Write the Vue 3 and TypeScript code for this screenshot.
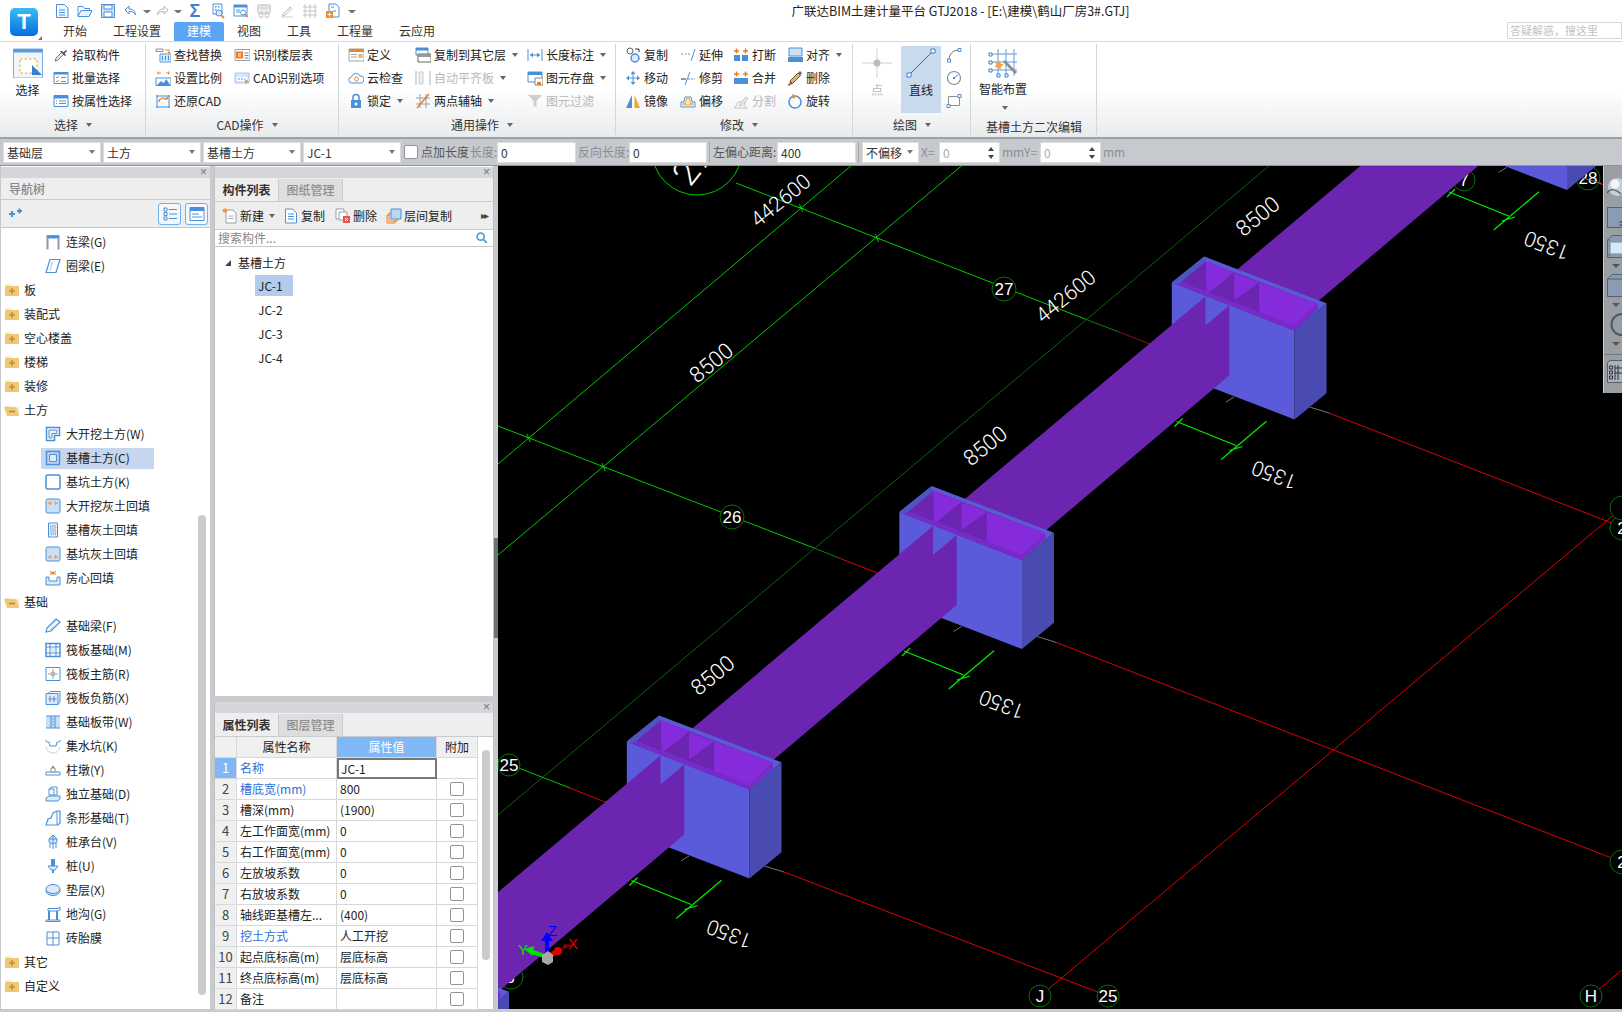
<script setup lang="ts">
const B = '#4a90d9'
const ic: Record<string, string> = {
  doc: `<path d="M2.5 1.5h8l3.5 3.5v9.5h-11.5z" fill="#f3f8fd" stroke="${B}"/><path d="M5 7h6M5 9.5h6M5 12h6" stroke="${B}"/>`,
  open: `<path d="M1 13V3.5h5l1.5 2h5v2" fill="none" stroke="${B}"/><path d="M1 13.5l3-6h11l-3 6z" fill="#eaf3fc" stroke="${B}"/>`,
  save: `<path d="M1.5 1.5h13v13h-13z" fill="#cfe3f7" stroke="${B}"/><path d="M4 2h8v4H4z" fill="#fff" stroke="${B}"/><path d="M4 9h8v5H4z" fill="#fff" stroke="${B}"/>`,
  undo: `<path d="M6 3L2 7l4 4V8.5c3 0 5 .5 6.5 3.5 0-4-2.5-6-6.5-6z" fill="#f3f8fd" stroke="${B}"/>`,
  redo: `<path d="M10 3l4 4-4 4V8.5c-3 0-5 .5-6.5 3.5 0-4 2.5-6 6.5-6z" fill="#fafafa" stroke="#b5b8bb"/>`,
  q1: `<path d="M3 1h9v10H3z" fill="#fff" stroke="${B}"/><path d="M5 3h1.5v1.5H5zM8 3h1.5v1.5H8zM5 6h1.5v1.5H5z" fill="${B}"/><circle cx="9" cy="10" r="3" fill="#dceafa" stroke="${B}"/><path d="M11 12l3 3" stroke="#f08a2c" stroke-width="2"/>`,
  q2: `<path d="M1 2h13v11H1z" fill="#fff" stroke="${B}"/><path d="M1 2h13v2.500H1z" fill="${B}"/><path d="M3 7h4M3 9h4" stroke="${B}"/><circle cx="10" cy="9.500" r="2.500" fill="#fff" stroke="${B}"/><path d="M12 11.500l2.500 2.500" stroke="#f08a2c" stroke-width="2"/>`,
  q3: `<path d="M2 2h12v8H2z" fill="#f4f4f4" stroke="#bbb"/><path d="M2 5h12M6 2v8M10 2v8" stroke="#ccc"/><circle cx="5" cy="12.500" r="2" fill="none" stroke="#bbb"/><circle cx="11" cy="12.500" r="2" fill="none" stroke="#bbb"/>`,
  q4: `<path d="M2 14h12" stroke="#ccc"/><path d="M4 11l7-7 2 1.500-7 7-3 .5z" fill="#eee" stroke="#c4c4c4"/>`,
  q5: `<path d="M3 1v14M8 1v14M13 1v14M1 4h14M1 8h14M1 12h14" stroke="#c6c6c6"/>`,
  q6: `<path d="M4 1h7l3 3v10H4z" fill="#fff" stroke="${B}"/><path d="M6 4h3M8 8h3" stroke="${B}"/><path d="M1 8h7v7H1z" fill="#f08a2c"/><path d="M4.500 9.500v4M2.500 11.500h4" stroke="#fff"/>`,
  pick: `<path d="M2 14l1-3 6-6 2 2-6 6z" fill="#e6e6e6" stroke="#777"/><path d="M9 4l1.500 1.500L13 3l1 1-2.500 2.500L13 8l-1 1-5-5z" fill="#444"/>`,
  batch: `<path d="M1 2.500h14v11H1z" fill="#fff" stroke="${B}"/><path d="M1 2.500h14v2H1z" fill="${B}"/><path d="M3 7l1 1 2-2M3 11l1 1 2-2" fill="none" stroke="#f08a2c"/><path d="M8 7.500h5M8 11.500h5" stroke="${B}"/>`,
  attr: `<path d="M1 2.500h14v11H1z" fill="#fff" stroke="${B}"/><path d="M1 2.500h14v3H1z" fill="${B}"/><path d="M6 8h7M6 10.500h7M3 8h1M3 10.500h1" stroke="${B}"/>`,
  find: `<path d="M1 2h7v2.500H1z" fill="#fff" stroke="#8a8f95"/><path d="M5 7h11v8H5z" fill="#fff" stroke="${B}"/><path d="M7.500 8.500v5M10.500 8.500v5M13.500 8.500v5" stroke="${B}" stroke-width="1.500"/><path d="M10 3h4v3" fill="none" stroke="#f08a2c"/><path d="M12.500 5h3L14 7z" fill="#f08a2c"/>`,
  scale: `<path d="M1 8h15v7.500H1z" fill="#fff" stroke="${B}"/><path d="M2 15l4-4 2.500 2 3-4 3.500 6z" fill="${B}"/><path d="M2 3h4M11 3h4M3 1.500v3M13.500 1.500v3" stroke="#f08a2c"/>`,
  restore: `<path d="M2 2v13M14 2v13M1 3h14M1 14h14" stroke="${B}"/><path d="M4 9a4 4 0 017-2.500" fill="none" stroke="#f08a2c" stroke-width="1.500"/><path d="M9 6.500h4V3z" fill="#f08a2c"/>`,
  floor: `<path d="M1 2.500h15v11H1z" fill="#fff" stroke="#9aa0a6"/><path d="M2 4.500h7v7H2z" fill="#ef7d1f"/><path d="M4 7h3M4 9h3" stroke="#fff"/><path d="M10.500 6h4M10.500 8.500h4M10.500 11h4" stroke="${B}"/>`,
  cad: `<path d="M1 3h14v10H1z" fill="#d4e6f8" stroke="#a8c8e8"/><path d="M3 7h10v4H3z" fill="#fff"/><path d="M4 9h7" stroke="${B}" stroke-dasharray="2 1"/><path d="M11 9l4 3-2.500.5-1 2.500z" fill="#f08a2c"/>`,
  def: `<path d="M1 2h15v12H1z" fill="#fff" stroke="#9fa4aa"/><path d="M1 2h15v3H1z" fill="#e58a20"/><path d="M3 7.500h6M3 10h6" stroke="#9fa4aa"/><path d="M10.500 7h4v4h-4z" fill="#e8b36a"/>`,
  cloud: `<path d="M4 13a3 3 0 01-.5-6A4.500 4.500 0 0112 6a3.500 3.500 0 011 7z" fill="#fff" stroke="${B}"/><circle cx="8.500" cy="9" r="2" fill="none" stroke="#f08a2c"/>`,
  lock: `<path d="M5 7V4.500a3 3 0 016 0V7" fill="none" stroke="${B}" stroke-width="1.500"/><path d="M3 7h10v8H3z" fill="${B}"/><circle cx="8" cy="11" r="1.500" fill="#fff"/>`,
  copyf: `<path d="M1 1h12v7H1z" fill="#fff" stroke="${B}"/><path d="M1 1h12v2.500H1z" fill="${B}"/><path d="M3 7h13v8H3z" fill="#fff" stroke="#666"/><path d="M3 7h13v3H3z" fill="#999"/>`,
  align: `<path d="M1 1v14M15 1v14" stroke="#ccc" stroke-width="1.500"/><path d="M4 2h4v12H4z" fill="#eee" stroke="#ccc"/>`,
  aux: `<path d="M1 5h14M1 11h14M5 1v14M11 1v14" stroke="#9aa0a6"/><path d="M2 15L14 1" stroke="#ef7d1f" stroke-width="1.500"/>`,
  dim: `<path d="M1 2v12M15 2v12M3 8h10" stroke="${B}"/><path d="M3 8l3-2.500v5zM13 8l-3-2.500v5z" fill="${B}"/>`,
  savee: `<path d="M1 2h14v10H1z" fill="#fff" stroke="${B}"/><path d="M1 2h14v3H1z" fill="${B}"/><path d="M8 8h8v7H8z" fill="#fff" stroke="#888"/><path d="M10 12h4v3h-4z" fill="#ef7d1f"/>`,
  filter: `<path d="M1 2h14L9.500 8v6l-3-1V8z" fill="#cfcfcf"/>`,
  copy: `<circle cx="5" cy="4" r="3" fill="#fff" stroke="#666"/><circle cx="10" cy="11" r="4" fill="#dceafa" stroke="${B}" stroke-width="1.500"/><path d="M10 2h4v3" fill="none" stroke="#333"/>`,
  ext: `<path d="M1 7h9" stroke="#8a8f95" stroke-dasharray="2 1.500"/><path d="M11 14L15 2" stroke="${B}"/>`,
  move: `<path d="M8 1l2.500 3h-5zM8 15l2.500-3h-5zM1 8l3-2.500v5zM15 8l-3-2.500v5z" fill="${B}"/><path d="M4 8h8M8 4v8" stroke="${B}"/>`,
  trim: `<path d="M1 9h5" stroke="#333"/><path d="M8 9h2M11 9h2M14 9h1" stroke="${B}"/><path d="M5 15L10 2" stroke="${B}"/>`,
  mirror: `<path d="M7 2v13H1z" fill="${B}"/><path d="M9.500 2v13H15z" fill="#f5a623"/>`,
  offset: `<path d="M1 14V9h3l1-5h6l1 5h3v5z" fill="#fff" stroke="${B}"/><path d="M3 12V10.500h2.500l1-5h3l1 5H13V12z" fill="#fce8c8" stroke="#f0a030"/>`,
  brk: `<path d="M1 8h6v6H1zM9 8h6v6H9z" fill="${B}"/><path d="M1 4h5M3.500 1.500v5M10 4h5M12.500 1.500v5" stroke="#ef7d1f" stroke-width="1.500"/>`,
  merge: `<path d="M1 8h14v6H1z" fill="${B}"/><path d="M1 4h5M3.500 1.500v5M10 4h5M12.500 1.500v5" stroke="#ef7d1f" stroke-width="1.500"/>`,
  split: `<path d="M1 15h14M2 15l3-6h7v6" fill="none" stroke="#c5c5c5"/><path d="M7 11l6-7 2 1.500-6 7-2.500 .5z" fill="#eee" stroke="#c0c0c0"/>`,
  alignr: `<path d="M2 1h13v8H2z" fill="#cfe0f4" stroke="${B}"/><path d="M1 10h15v5H1z" fill="${B}"/>`,
  del: `<path d="M3 15h-2" stroke="#333"/><path d="M3 11l8-8 2.500 2.500-8 8z" fill="#d9b382" stroke="#6b5232"/><path d="M2 15l1-4 3 3z" fill="#a8471e"/><path d="M11 3l2-2 2 2-2 2.500z" fill="#666"/>`,
  rot: `<circle cx="8" cy="9" r="6" fill="none" stroke="${B}" stroke-width="1.500"/><path d="M5 1l5 2-4 3z" fill="#f08a2c"/>`,
  arc: `<path d="M3 13C3 7 7 3 13 3" fill="none" stroke="#6e7378"/><path d="M1.500 12h3v3h-3zM12 1.500h3v3h-3z" fill="#fff" stroke="${B}"/>`,
  circ: `<circle cx="8" cy="8" r="6.500" fill="#fff" stroke="#8a8f95" stroke-width="1.200"/><path d="M8 8l4-3" stroke="${B}"/><path d="M7 7h2v2H7z" fill="${B}"/>`,
  rect: `<path d="M2.500 3.500h11v9h-11z" fill="#fff" stroke="#8a8f95"/><path d="M1 11.500h3v3H1zM12 1.500h3v3h-3z" fill="#fff" stroke="${B}"/>`,
  t_lian: `<path d="M1.500 1.500h13v3h-13z" fill="${B}"/><path d="M2.500 4.500v11M13.500 4.500v11" stroke="#8c9aa8" stroke-width="2"/><path d="M2 1.500h12" stroke="#8c9aa8"/>`,
  t_quan: `<path d="M1 14.500L5 1.500h10l-4 13z" fill="#fff" stroke="${B}" stroke-width="1.200"/><path d="M5 12.500L7.500 3.500" stroke="#cfe0f4" stroke-width="2"/>`,
  t_da: `<path d="M1.500 1.500h13v8h-5v5h-8z" fill="#fff" stroke="${B}" stroke-width="1.500"/><path d="M4 4h8v3.500H7v4.500H4z" fill="#eaf2fb" stroke="${B}"/>`,
  t_cao: `<path d="M1.500 1.500h13v13h-13z" fill="#bcd8f5" stroke="${B}" stroke-width="1.500"/><path d="M4.500 4.500h7v7h-7z" fill="#dceafa" stroke="${B}"/>`,
  t_keng: `<rect x="1" y="1" width="14" height="14" rx="1.500" fill="#fff" stroke="${B}" stroke-width="1.500"/>`,
  t_fill1: `<rect x="1" y="1" width="14" height="14" rx="1.500" fill="#c7dff7" stroke="${B}"/><path d="M3 4l2.500 2.500M6 3.500l-.5 3M13 4l-2.500 2.500M10 3.500l.5 3" stroke="#ef7d1f"/>`,
  t_fill2: `<path d="M3.500 1h9v14h-9z" fill="#fff" stroke="${B}"/><path d="M5 3h6v10H5z" fill="#bcd0e8" stroke="#8fb2dd" stroke-dasharray="1 1"/>`,
  t_fill3: `<rect x="1" y="1" width="14" height="14" rx="1.500" fill="#c7dff7" stroke="${B}"/><path d="M3 12l2.500-2.500M6 12.500l-.5-3M13 12l-2.500-2.500M10 12.500l.5-3" stroke="#ef7d1f"/>`,
  t_room: `<path d="M1 7v8h14V7h-3v4H4V7z" fill="#dceafa" stroke="${B}"/><path d="M5 1l2.500 3M5 4h2.500V1.500M11 1L8.500 4M11 4H8.500V1.500" stroke="#ef7d1f" fill="none"/>`,
  t_liang: `<path d="M1 14l1-4L11 1l4 3-9 9z" fill="#fff" stroke="${B}" stroke-width="1.200"/><path d="M3 10l9-8M5 12l9-8" stroke="#aac8ea"/>`,
  t_fb: `<path d="M1 1.500h14v13H1z" fill="#fff" stroke="${B}" stroke-width="1.500"/><path d="M5 2v12M11 2v12M1.500 5h13M1.500 11h13" stroke="${B}"/><path d="M6 6h4v4H6z" fill="#dceafa"/>`,
  t_zj: `<path d="M1 1.500h14v13H1z" fill="#fff" stroke="${B}"/><path d="M8 3v10M3 8h10" stroke="#a0a6ad"/><circle cx="8" cy="8" r="2" fill="none" stroke="#a0a6ad"/>`,
  t_fj: `<path d="M1 3.500h12v11H1z" fill="#dceafa" stroke="${B}"/><path d="M3 3.500l2-2h10v10l-2 3" fill="none" stroke="${B}"/><path d="M5 6v6M9 6v6M3.500 9h8" stroke="${B}"/>`,
  t_bd: `<path d="M1 2h14v12H1z" fill="#c7dff7"/><path d="M1 2h14M1 14h14M6 2v12M10 2v12" stroke="${B}"/><path d="M8 4v8" stroke="${B}" stroke-dasharray="1.500 1.500"/>`,
  t_jsk: `<path d="M1 2c0 3 2 2 3 2l1 4h6l1-4c1 0 3 1 3-2" fill="none" stroke="${B}"/><path d="M1 9c1 4 4 6 7 6s6-2 7-6" fill="none" stroke="#a9b8c6" stroke-dasharray="1.500 1"/>`,
  t_zd: `<path d="M1 10h14v3H1z" fill="#fff" stroke="${B}"/><path d="M6 10V6h4v4z" fill="#fff" stroke="#8a8f95"/><path d="M7 6V4h2v2z" fill="#8a8f95"/>`,
  t_dl: `<path d="M1 12l3-2h11v2.500l-2 2.500H1z" fill="#dceafa" stroke="${B}"/><path d="M4 9V3l3-2h5v8z" fill="#fff" stroke="${B}"/><path d="M4 3h5v6" fill="none" stroke="${B}"/>`,
  t_tx: `<path d="M1 15l2-6 3-1 2-5 4-2h3v12l-2 2z" fill="#fff" stroke="${B}" stroke-width="1.200"/><path d="M12 1v14" stroke="${B}"/>`,
  t_cht: `<path d="M8 1l4 4v3l-4 2-4-2V5z" fill="#dceafa" stroke="${B}"/><path d="M5 9v5M8 10v5M11 9v5M4 5h8M8 1v9" stroke="${B}"/>`,
  t_zhuang: `<path d="M6 1h4v7H6z" fill="${B}"/><path d="M3 8h10l-3 4H6z" fill="#dceafa" stroke="${B}"/><path d="M8 12v3" stroke="${B}" stroke-width="2"/>`,
  t_dc: `<ellipse cx="8" cy="9" rx="7" ry="4.500" fill="#c7dff7" stroke="${B}"/><ellipse cx="8" cy="7" rx="7" ry="4.500" fill="#dceafa" stroke="${B}"/>`,
  t_dg: `<path d="M3 2.500h10l2-1.500v3l-2 1H3zM1 14h14v1.500H1z" fill="#fff" stroke="${B}"/><path d="M4 5v9M12 5v9" stroke="${B}" stroke-width="2"/>`,
  t_zt: `<path d="M2 2h12v13H2zM8 2v13M2 8h12" fill="#fff" stroke="${B}"/>`,
  n_new: `<path d="M4 2h7l3 3v10H4z" fill="#fff" stroke="#9aa0a6"/><path d="M6 8h6M6 10.500h6" stroke="#b5b8bb"/><path d="M3 0v5M.5 2.500h5M1 1l4 3M5 1L1 4" stroke="#f08a2c"/>`,
  n_copy: `<path d="M2.500 1h7l4 4v10h-11z" fill="#fff" stroke="${B}"/><path d="M5 6h6M5 8.500h6M5 11h6" stroke="${B}"/>`,
  n_del: `<path d="M1 1h8v10H1z" fill="#fff" stroke="#9aa0a6"/><path d="M4 4h8v8H4z" fill="#fff" stroke="#9aa0a6"/><path d="M8 8h7v7H8z" fill="#e25555"/><path d="M10 10l3 3M13 10l-3 3" stroke="#fff"/>`,
  n_floor: `<path d="M1 7h3M1 7v8h8v-3M3 5h3M3 5v8h8v-2" fill="none" stroke="#ef7d1f"/><path d="M5 1h10v10H5z" fill="#bcd8f5" stroke="${B}"/>`,
  search: `<circle cx="6.500" cy="6.500" r="4" fill="#fff" stroke="#4aa3d8" stroke-width="2"/><path d="M9.500 9.500l4 4" stroke="#4aa3d8" stroke-width="2"/>`,
  n_list: `<path d="M2 2h3v3H2zM2 6.500h3v3H2zM2 11h3v3H2z" fill="none" stroke="${B}"/><path d="M7 3.500h8M7 8h8M7 12.500h8" stroke="${B}"/>`,
  n_win: `<path d="M1 1.500h14v13H1z" fill="#fff" stroke="${B}"/><path d="M1 1.500h14v3.500H1z" fill="${B}"/><path d="M3 8h7M3 11h10" stroke="${B}"/>`,
  n_add: `<path d="M1 8h6M4 5v6" stroke="${B}" stroke-width="2"/><path d="M9 5h5M11.500 2.500v5" stroke="${B}" stroke-width="2"/>`
}

const qat = ['doc', 'open', 'save', 'undo', '^', 'redo', '^', 'S', 'q1', 'q2', 'q3', 'q4', 'q5', 'q6']
const tabs = ['开始', '工程设置', '建模', '视图', '工具', '工程量', '云应用']

interface It { t: string; i: string; a?: boolean; d?: boolean }
const g1: It[][] = [[{ t: '拾取构件', i: 'pick' }, { t: '批量选择', i: 'batch' }, { t: '按属性选择', i: 'attr' }]]
const g2: It[][] = [
  [{ t: '查找替换', i: 'find' }, { t: '设置比例', i: 'scale' }, { t: '还原CAD', i: 'restore' }],
  [{ t: '识别楼层表', i: 'floor' }, { t: 'CAD识别选项', i: 'cad' }]
]
const g3: It[][] = [
  [{ t: '定义', i: 'def' }, { t: '云检查', i: 'cloud' }, { t: '锁定', i: 'lock', a: true }],
  [{ t: '复制到其它层', i: 'copyf', a: true }, { t: '自动平齐板', i: 'align', a: true, d: true }, { t: '两点辅轴', i: 'aux', a: true }],
  [{ t: '长度标注', i: 'dim', a: true }, { t: '图元存盘', i: 'savee', a: true }, { t: '图元过滤', i: 'filter', d: true }]
]
const g4: It[][] = [
  [{ t: '复制', i: 'copy' }, { t: '移动', i: 'move' }, { t: '镜像', i: 'mirror' }],
  [{ t: '延伸', i: 'ext' }, { t: '修剪', i: 'trim' }, { t: '偏移', i: 'offset' }],
  [{ t: '打断', i: 'brk' }, { t: '合并', i: 'merge' }, { t: '分割', i: 'split', d: true }],
  [{ t: '对齐', i: 'alignr', a: true }, { t: '删除', i: 'del' }, { t: '旋转', i: 'rot' }]
]
const groups = [
  { cls: 'g2', cols: g2, label: 'CAD操作' },
  { cls: 'g3', cols: g3, label: '通用操作' },
  { cls: 'g4', cols: g4, label: '修改' }
]

const tree: { t: string; i?: string; f?: 'c' | 'o'; sel?: boolean }[] = [
  { t: '连梁(G)', i: 't_lian' }, { t: '圈梁(E)', i: 't_quan' },
  { t: '板', f: 'c' }, { t: '装配式', f: 'c' }, { t: '空心楼盖', f: 'c' }, { t: '楼梯', f: 'c' }, { t: '装修', f: 'c' },
  { t: '土方', f: 'o' },
  { t: '大开挖土方(W)', i: 't_da' }, { t: '基槽土方(C)', i: 't_cao', sel: true }, { t: '基坑土方(K)', i: 't_keng' },
  { t: '大开挖灰土回填', i: 't_fill1' }, { t: '基槽灰土回填', i: 't_fill2' }, { t: '基坑灰土回填', i: 't_fill3' }, { t: '房心回填', i: 't_room' },
  { t: '基础', f: 'o' },
  { t: '基础梁(F)', i: 't_liang' }, { t: '筏板基础(M)', i: 't_fb' }, { t: '筏板主筋(R)', i: 't_zj' }, { t: '筏板负筋(X)', i: 't_fj' },
  { t: '基础板带(W)', i: 't_bd' }, { t: '集水坑(K)', i: 't_jsk' }, { t: '柱墩(Y)', i: 't_zd' }, { t: '独立基础(D)', i: 't_dl' },
  { t: '条形基础(T)', i: 't_tx' }, { t: '桩承台(V)', i: 't_cht' }, { t: '桩(U)', i: 't_zhuang' }, { t: '垫层(X)', i: 't_dc' },
  { t: '地沟(G)', i: 't_dg' }, { t: '砖胎膜', i: 't_zt' },
  { t: '其它', f: 'c' }, { t: '自定义', f: 'c' }
]

const rows = [
  { n: '名称', v: 'JC-1', b: true, edit: true, nc: true },
  { n: '槽底宽(mm)', v: '800', b: true },
  { n: '槽深(mm)', v: '(1900)' },
  { n: '左工作面宽(mm)', v: '0' },
  { n: '右工作面宽(mm)', v: '0' },
  { n: '左放坡系数', v: '0' },
  { n: '右放坡系数', v: '0' },
  { n: '轴线距基槽左...', v: '(400)' },
  { n: '挖土方式', v: '人工开挖', b: true },
  { n: '起点底标高(m)', v: '层底标高' },
  { n: '终点底标高(m)', v: '层底标高' },
  { n: '备注', v: '' }
]

const mods = [3, 2, 1, 0, -1, -2]
const tf = (k: number) => `translate(${k * 272.5} ${-k * 229.5})`
const gridLines = [
  ['852 165 498 464', 'bright'], ['962.500 165 498 555', 'bright'], ['1270 165 498 815', 'dark'],
  ['498 426 814 548', 'bright'], ['814 548 839 558', 'dark2'], ['839 558 880 574', 'red'],
  ['736 183 1085 319', 'bright'], ['1085 319 1119 332', 'dark2'], ['1119 332 1155 346', 'dred'],
  ['498 760 570 788', 'bright'], ['570 788 620 808', 'red'],
  ['1056.500 642.500 1622 862', 'red'], ['1329 413 1622 527', 'red'], ['784 872 1108 996', 'red'],
  ['1585 178 1622 192', 'red'], ['1040 996 1622 508', 'red'], ['1591 996 1622 970', 'red']
].map(([s, c]) => { const p = s.split(' '); return { x1: p[0], y1: p[1], x2: p[2], y2: p[3], c } })
const crosses = [[877, 238], [603.6, 467], [528.6, 438], [801, 208]]
const circles: [number, number, number, string][] = [
  [732, 517, 12, '26'], [1004, 289, 12, '27'], [509, 765, 11, '25'], [1588, 178, 12, '28'],
  [1040, 996, 11, 'J'], [1108, 996, 11, '25'], [1591, 996, 11, 'H'], [1622, 528, 12, '2'],
  [1622, 508, 12, ''], [1622, 862, 12, '2'], [1464, 180, 11, '7'], [511, 977, 12, 'J']
]
</script>

<template>
  <div class="app">
    <div class="top">
      <div class="logo-cell">
        <div class="logo">T</div>
        <i class="logo-tri"></i>
      </div>
      <div class="top-r">
        <div class="qat">
          <template v-for="(q, k) in qat" :key="k">
            <span v-if="q === '^'" class="qcaret"></span>
            <span v-else-if="q === 'S'" class="q sigma">Σ</span>
            <span v-else class="q"><svg class="i16" viewBox="0 0 16 16" v-html="ic[q]"></svg></span>
          </template>
          <span class="qcaret qlast"></span>
          <span class="title">广联达BIM土建计量平台 GTJ2018 - [E:\建模\鹤山厂房3#.GTJ]</span>
        </div>
        <div class="tabs">
          <span v-for="t in tabs" :key="t" class="tab" :class="{ on: t === '建模' }">{{ t }}</span>
          <span class="help">答疑解惑，搜这里</span>
        </div>
      </div>
    </div>

    <div class="ribbon">
      <section class="grp g1">
        <div class="gbody">
          <div class="big">
            <svg class="i30" viewBox="0 0 30 30">
              <path d="M.5 1h29v29H.5z" fill="#eef5fc" stroke="#7fb0e4" />
              <path d="M.5 1h29v3.500H.5z" fill="#5d9be0" />
              <path d="M7 11h17v14H7z" fill="#fff" stroke="#f5a623" stroke-dasharray="2.500 2" />
              <path d="M19 17l10 10H19z" fill="#3d7fcb" />
            </svg>
            <span>选择</span>
          </div>
          <div class="col">
            <div v-for="it in g1[0]" :key="it.t" class="item"><svg class="i16" viewBox="0 0 16 16" v-html="ic[it.i]"></svg><span>{{ it.t }}</span></div>
          </div>
        </div>
        <div class="glabel">选择<i class="car"></i></div>
      </section>

      <section v-for="g in groups" :key="g.cls" class="grp" :class="g.cls">
        <div class="gbody">
          <div v-for="(c, k) in g.cols" :key="k" class="col">
            <div v-for="it in c" :key="it.t" class="item" :class="{ dis: it.d }">
              <svg class="i16" viewBox="0 0 16 16" v-html="ic[it.i]"></svg><span>{{ it.t }}</span><i v-if="it.a" class="car"></i>
            </div>
          </div>
        </div>
        <div class="glabel">{{ g.label }}<i class="car"></i></div>
      </section>

      <section class="grp g5">
        <div class="gbody">
          <div class="big bigp dis">
            <svg class="i30" viewBox="0 0 30 30">
              <path d="M15 0v30M0 15h30" stroke="#cfcfcf" />
              <circle cx="15" cy="15" r="3.500" fill="#bdbdbd" />
            </svg>
            <span>点</span>
          </div>
          <div class="big bigl">
            <svg class="i30" viewBox="0 0 30 30">
              <path d="M3 27L27 3" stroke="#5c6670" />
              <path d="M1 25h4v4H1zM25 1h4v4h-4z" fill="#fff" stroke="#3d7fcb" />
            </svg>
            <span>直线</span>
          </div>
          <div class="col colicons">
            <div class="item"><svg class="i16" viewBox="0 0 16 16" v-html="ic.arc"></svg></div>
            <div class="item"><svg class="i16" viewBox="0 0 16 16" v-html="ic.circ"></svg></div>
            <div class="item"><svg class="i16" viewBox="0 0 16 16" v-html="ic.rect"></svg></div>
          </div>
        </div>
        <div class="glabel">绘图<i class="car"></i></div>
      </section>

      <section class="grp g6">
        <div class="gbody">
          <div class="big bigs">
            <svg class="i30" viewBox="0 0 30 30">
              <path d="M3 6h26M3 14h26M3 22h26M10 1v27M18 1v27M26 1v27" stroke="#5d9be0" />
              <path d="M1 5h3v3H1zM1 13h3v3H1zM1 21h3v3H1zM9 26h3v3H9zM17 26h3v3h-3z" fill="#fff" stroke="#3d7fcb" />
              <path d="M11 12l1.500 3.500 3.500 1-3 2-.5 3.500-2.500-3-3.500.5 2-3-1.500-3 3.500 1z" fill="#f5a04a" />
              <path d="M15 14l2-2 12 12-2 2z" fill="#8a8f95" />
            </svg>
            <span>智能布置</span>
            <i class="car carb"></i>
          </div>
        </div>
        <div class="glabel g6l">基槽土方二次编辑</div>
      </section>
      <div class="ribbon-rest"></div>
    </div>

    <div class="bar">
      <div class="combo c98">基础层<i class="car"></i></div>
      <div class="combo c98">土方<i class="car"></i></div>
      <div class="combo c98">基槽土方<i class="car"></i></div>
      <div class="combo c98">JC-1<i class="car"></i></div>
      <i class="chk"></i>
      <span class="bl w49 grey">点加长度</span>
      <span class="bl w27 mute">长度:</span>
      <div class="inp w79">0</div>
      <span class="bl w51 mute">反向长度:</span>
      <div class="inp w78">0</div>
      <i class="bsep"></i>
      <span class="bl w64 grey">左偏心距离:</span>
      <div class="inp w79">400</div>
      <i class="bsep"></i>
      <div class="combo c57">不偏移<i class="car"></i></div>
      <span class="bl w18 mute">X=</span>
      <div class="spin w61">0<b></b></div>
      <span class="bl w38 mute">mmY=</span>
      <div class="spin w61">0<b></b></div>
      <span class="bl mute">mm</span>
    </div>

    <div class="main">
      <aside class="nav">
        <div class="phead"><span>×</span></div>
        <div class="navt">导航树</div>
        <div class="navb">
          <svg class="i16" viewBox="0 0 16 16" v-html="ic.n_add"></svg>
          <span class="navbtn nb1"><svg class="i16" viewBox="0 0 16 16" v-html="ic.n_list"></svg></span>
          <span class="navbtn"><svg class="i16" viewBox="0 0 16 16" v-html="ic.n_win"></svg></span>
        </div>
        <div class="tree">
          <div v-for="r in tree" :key="r.t" class="trow" :class="{ sub: !r.f }">
            <template v-if="r.f">
              <svg class="fold" viewBox="0 0 16 14">
                <template v-if="r.f === 'c'">
                  <path d="M2 1.500h5l1 1.500H2z" fill="#f5e2bd" />
                  <path d="M1 3h14v10H1z" fill="#eec777" />
                  <path d="M8 5v6M5 8h6" stroke="#c98f2f" stroke-width="1.500" />
                </template>
                <template v-else>
                  <path d="M1 3h5l1 1.500h8v8.500H4z" fill="#f5e2bd" />
                  <path d="M0 4h12l3 9H3z" fill="#eec777" />
                  <path d="M5 8.500h6" stroke="#b8862c" stroke-width="1.500" />
                </template>
              </svg>
              <span>{{ r.t }}</span>
            </template>
            <div v-else class="leaf" :class="{ sel: r.sel }">
              <svg class="i16" viewBox="0 0 16 16" v-html="ic[r.i!]"></svg><span>{{ r.t }}</span>
            </div>
          </div>
        </div>
        <i class="thumb tnav"></i>
      </aside>

      <div class="midcol">
        <div class="panel p1">
          <div class="phead"><span>×</span></div>
          <div class="ptabs"><span class="ptab on">构件列表</span><span class="ptab">图纸管理</span></div>
          <div class="ptool">
            <svg class="i16" viewBox="0 0 16 16" v-html="ic.n_new"></svg><span>新建</span><i class="car"></i>
            <svg class="i16 m1" viewBox="0 0 16 16" v-html="ic.n_copy"></svg><span>复制</span>
            <svg class="i16 m2" viewBox="0 0 16 16" v-html="ic.n_del"></svg><span>删除</span>
            <svg class="i16 m3" viewBox="0 0 16 16" v-html="ic.n_floor"></svg><span>层间复制</span>
            <span class="more">▸▸</span>
          </div>
          <div class="psearch"><span>搜索构件...</span><svg class="i14" viewBox="0 0 16 16" v-html="ic.search"></svg></div>
          <div class="plist">
            <div class="proot"><i class="tri"></i>基槽土方</div>
            <div class="pitem sel">JC-1</div>
            <div class="pitem">JC-2</div>
            <div class="pitem">JC-3</div>
            <div class="pitem">JC-4</div>
          </div>
        </div>
        <div class="panel p2">
          <div class="phead"><span>×</span></div>
          <div class="ptabs"><span class="ptab on">属性列表</span><span class="ptab">图层管理</span></div>
          <div class="tbl">
            <div class="tr th">
              <span class="num"></span><span class="nm">属性名称</span><span class="val hi">属性值</span><span class="add">附加</span>
            </div>
            <div v-for="(r, k) in rows" :key="k" class="tr">
              <span class="num" :class="{ hi: k === 0 }">{{ k + 1 }}</span>
              <span class="nm" :class="{ blue: r.b }">{{ r.n }}</span>
              <span class="val" :class="{ edit: r.edit }">{{ r.v }}</span>
              <span class="add"><i v-if="!r.nc" class="chk"></i></span>
            </div>
          </div>
          <i class="thumb tprop"></i>
        </div>
      </div>

      <div class="split"><i></i></div>

      <div class="canvas">
        <svg class="scene" viewBox="498 166 1124 843" width="1124" height="843">
          <line v-for="(l, k) in gridLines" :key="k" :x1="l.x1" :y1="l.y1" :x2="l.x2" :y2="l.y2" :class="'ln ' + l.c" />
          <g v-for="(c, k) in crosses" :key="'x' + k" :transform="`translate(${c[0]} ${c[1]})`">
            <path d="M-1.500 -4L1.500 4M-3 -1L3 1" class="ln bright" />
          </g>
          <circle cx="697" cy="150" r="45" class="ln bright nofill" />
          <text class="cad" font-size="36" transform="translate(690 188) rotate(-52)">27</text>
          <text class="cad" font-size="21" transform="translate(758 228) rotate(-39)">442600</text>
          <text class="cad" font-size="22" transform="translate(697 384) rotate(-39)">8500</text>
          <text class="cad" font-size="21" transform="translate(1043 324) rotate(-39)">442600</text>

          <template v-for="c in circles" :key="c[3] + c[0]">
            <circle :cx="c[0]" :cy="c[1]" :r="c[2]" class="axc" />
            <text class="axt" :x="c[0]" :y="c[1] + 6">{{ c[3] }}</text>
          </template>

          <g v-for="k in [2, 1, 0, -1]" :key="'d' + k" :transform="tf(k)">
            <path d="M904 651L963.600 675M994 650.700L948.700 689M957 680L970 676M902 656L910 648" class="ln bright2" />
            <text class="cad" font-size="21" transform="translate(1026 706) rotate(201)">1350</text>
            <path d="M953.500 631.500L961.500 626.500M1037 636.500L1056.500 642.500" class="ln grey" />
          </g>
          <g v-for="k in [1, 0, -1]" :key="'t' + k" :transform="tf(k)">
            <text class="cad" font-size="22" transform="translate(971 467) rotate(-39)">8500</text>
          </g>

          <g v-for="k in mods" :key="k" :transform="tf(k)">
            <path d="M899.300 512L1022 560V649L941.500 618L899.300 597Z" fill="#5a5adb" />
            <path d="M1022 560L1054 532.700V622.700L1022 649Z" fill="#4a4ab3" />
            <path d="M931.700 486L1054 532.700L1022 560L899.300 512Z" fill="#5a5ad4" />
            <path d="M931.700 486L933.300 490.700L908.300 511.700L899.300 512Z" fill="#4d56be" />
            <path d="M933.300 490.700L1045 533.300L1021.700 555L908.300 511.700Z" fill="#6c25b1" />
            <path d="M933.300 490.700L961.700 501.700L934 524Z" fill="#862bdc" />
            <path d="M961.700 502.700L986.700 511.700L961.700 530Z" fill="#862bdc" />
            <path d="M986.700 511.700L1045 533.300L1021.700 555L986.700 541.700Z" fill="#862bdc" />
            <path d="M908.300 511.700L1021.700 555V560L903.300 513.300Z" fill="#7a28cb" />
            <path d="M1021.700 555L1045 533.300L1045.700 538.300L1021.700 560Z" fill="#7a28cb" />
            <path d="M673.200 744.500L933 526V555L956.700 535V605L756.200 774.500Z" fill="#6c25b1" />
          </g>

          <g class="gizmo">
            <path d="M547 957V938" stroke="#0000ff" stroke-width="4" />
            <path d="M541 941L547 932L553 941Z" fill="#0000ff" />
            <path d="M547 957L530 951" stroke="#00e000" stroke-width="4" />
            <path d="M524 949L534 946L533 956Z" fill="#00e000" />
            <path d="M547 957L560 950" stroke="#e00000" stroke-width="5" />
            <circle cx="558" cy="951" r="4" fill="#e00000" />
            <path d="M562 950L572 945L564 944Z" fill="#8a0000" />
            <path d="M542 955L548 951L553 955V962L548 965L542 962Z" fill="#a8a8a8" />
            <text x="548" y="936" class="gz" fill="#0000ff">Z</text>
            <text x="518" y="955" class="gz" fill="#00e000">Y</text>
            <text x="568" y="949" class="gz" fill="#e00000">X</text>
          </g>
        </svg>

        <div class="strip">
          <svg class="sphere" viewBox="0 0 15 18">
            <circle cx="10" cy="9" r="9" fill="#c6ced6" />
            <circle cx="8" cy="6" r="4.500" fill="#f4f5f6" />
            <path d="M0 15c3-5 9-4 14 1" fill="none" stroke="#50555a" stroke-width="1.200" />
          </svg>
          <svg class="sbtn" viewBox="0 0 15 21">
            <rect x=".5" y=".5" width="20" height="20" fill="#8a9bb2" stroke="#526072" />
            <path d="M12.500 18h2.500M12.500 15h2.500" stroke="#333" />
          </svg>
          <svg class="scube" viewBox="0 0 15 23">
            <path d="M.5 5L5 .5h11v22H.5z" fill="#8a9bb2" stroke="#526072" />
            <path d="M3 7h13v12H3z" fill="#d7e8fb" stroke="#7d8b9c" />
            <path d="M.5 5H3M.5 22L3 19" stroke="#526072" />
          </svg>
          <i class="scar"></i>
          <svg class="scube" viewBox="0 0 15 23">
            <path d="M.5 5L5 .5h11v22H.5z" fill="#8a9bb2" stroke="#526072" />
            <path d="M.5 5H16" stroke="#526072" />
          </svg>
          <i class="scar"></i>
          <svg class="scube" viewBox="0 0 15 23">
            <circle cx="15" cy="11.500" r="10.500" fill="none" stroke="#4c5865" stroke-width="2" />
          </svg>
          <i class="scar"></i>
          <hr />
          <svg class="scube" viewBox="0 0 15 23">
            <path d="M.5 2.500L3 .5h13v22H.5z" fill="#a9b2bd" stroke="#526072" />
            <path d="M2.500 6h3v3h-3zM2.500 11h3v3h-3zM2.500 16h3v3h-3z" fill="none" stroke="#333" />
            <path d="M8 5v15M11 5v15M8 8h7M8 13h7" stroke="#333" />
          </svg>
        </div>
      </div>
    </div>
    <div class="foot"></div>
  </div>
</template>

<style>
html, body { background: #c8cacd; overflow: hidden; }
</style>

<style scoped>
.app {
  width: 1622px; height: 1012px; display: flex; flex-direction: column; overflow: hidden;
  font: 12px/16px "Noto Sans CJK SC", "Liberation Sans", sans-serif; color: #222;
  background: #c8cacd;
}
svg { display: block; flex: none; }
.i16 { width: 16px; height: 16px; }
.i14 { width: 14px; height: 14px; }
.i30 { width: 30px; height: 30px; }

.top { height: 41px; display: flex; background: #fff; flex: none; }
.logo-cell { width: 50px; position: relative; flex: none; }
.logo {
  margin: 8px 0 0 10px; width: 28px; height: 28px; border-radius: 5px;
  background: linear-gradient(#35bdf6, #0a6de0); color: #fff;
  font: 900 22px/28px "Liberation Sans", sans-serif; text-align: center;
}
.logo-tri {
  position: absolute; left: 38px; top: 36px; width: 0; height: 0;
  border-left: 4px solid transparent; border-bottom: 4px solid #777;
}
.top-r { flex: 1; display: flex; flex-direction: column; min-width: 0; }
.qat { height: 22px; display: flex; align-items: center; padding-left: .5px; }
.q { width: 23px; display: flex; justify-content: center; flex: none; }
.qcaret {
  width: 8px; flex: none; height: 0; position: relative;
  border-top: 3px solid #777; border-left: 3px solid transparent; border-right: 3px solid transparent;
  box-sizing: border-box;
}
.qcaret.qlast { margin-left: 3px; }
.sigma { color: #3f7fd0; font: 700 18px/18px "Liberation Sans", sans-serif; margin-left: 2px; }
.title { margin-left: 436px; white-space: nowrap; font-size: 12.5px; color: #222; }
.tabs { height: 19px; display: flex; align-items: stretch; }
.tab { padding: 0 13px; line-height: 18px; color: #333; white-space: nowrap; }
.tab.on { background: #5aa6f5; color: #fff; border-radius: 2px 2px 0 0; }
.help {
  margin-left: auto; width: 115px; height: 17px; box-sizing: border-box; border: 1px solid #d8d8d8;
  font-size: 11px; line-height: 15px; color: #c2c2c2; padding-left: 2px;
}

.ribbon {
  height: 98px; flex: none; display: flex; box-sizing: border-box;
  border-top: 1px solid #d6d8da; border-bottom: 2px solid #9ca1a5;
  background: linear-gradient(#fff 0, #fff 50%, #e8ebed 100%);
}
.grp { display: flex; flex-direction: column; flex: none; position: relative; box-sizing: border-box; padding-top: 1px; }
.grp::after { content: ""; position: absolute; right: 0; top: 2px; bottom: 2px; width: 1px; background: #d4d6d8; }
.gbody { height: 71px; display: flex; }
.glabel { height: 20px; display: flex; align-items: center; justify-content: center; gap: 5px; color: #333; margin-top: 1px; }
.g1 { width: 146px; }
.g2 { width: 193px; padding-left: 9px; }
.g3 { width: 277px; padding-left: 9px; }
.g4 { width: 237px; padding-left: 9px; }
.g5 { width: 118px; }
.g6 { width: 126px; }
.ribbon-rest { flex: 1; }
.col { display: flex; flex-direction: column; }
.g1 .col { width: 92px; }
.g2 .col:first-child { width: 79px; }
.g3 .col:nth-child(1) { width: 67px; }
.g3 .col:nth-child(2) { width: 112px; }
.g4 .col:nth-child(1) { width: 55px; }
.g4 .col:nth-child(2) { width: 53px; }
.g4 .col:nth-child(3) { width: 54px; }
.item { height: 23px; display: flex; align-items: center; gap: 3px; white-space: nowrap; }
.dis, .dis span { color: #b8b8b8; }
.big { width: 53px; display: flex; flex-direction: column; align-items: center; padding: 5px 0 0 2px; gap: 4px; box-sizing: border-box; }
.bigp { width: 48px; padding-left: 0; }
.bigl { width: 40px; height: 67px; background: #c9d9ee; padding-left: 0; margin-top: 3px; padding-top: 2px; }
.colicons { margin-left: 5px; }
.bigs { width: 64px; gap: 3px; padding-left: 0; }
.carb { margin-top: 6px; margin-left: 0; }
.g6l { white-space: nowrap; margin-top: 3px; }
.car {
  display: inline-block; width: 0; height: 0; flex: none; margin-left: 3px;
  border-top: 4px solid #666; border-left: 3.5px solid transparent; border-right: 3.5px solid transparent;
}

.bar {
  height: 26px; flex: none; background: #c6c9cd; display: flex; align-items: center; padding-left: 3px;
  border-bottom: 1px solid #8f9499; box-sizing: content-box; gap: 0;
}
.combo, .inp, .spin {
  height: 21px; box-sizing: border-box; background: #fff; line-height: 19px; padding: 0 3px;
  position: relative; flex: none; border: 1px solid #dcdcdc; margin-right: 2px; color: #333;
}
.combo { display: flex; align-items: center; justify-content: space-between; }
.combo .car { margin-right: 2px; border-top-color: #777; }
.c98 { width: 98px; }
.c57 { width: 57px; }
.chk {
  display: block; width: 14px; height: 14px; box-sizing: border-box; background: #fff; border: 1px solid #8f9499; border-radius: 2px; flex: none;
}
.bar > .chk { margin: 0 3px 0 1px; }
.bl { flex: none; white-space: nowrap; }
.grey { color: #555; }
.mute { color: #8a8e92; }
.w49 { width: 49px; }
.w27 { width: 27px; }
.w51 { width: 51px; }
.w64 { width: 64px; }
.w18 { width: 18px; }
.w38 { width: 38px; }
.w79 { width: 79px; }
.w78 { width: 78px; }
.w61 { width: 61px; color: #aaa; }
.inp { margin-right: 2px; }
.bsep { width: 1px; height: 21px; background: #a8abae; margin: 0 3px 0 0; flex: none; }
.spin b { position: absolute; right: 4px; top: 4px; width: 7px; height: 12px; }
.spin b::before, .spin b::after {
  content: ""; position: absolute; left: 0; width: 0; height: 0;
  border-left: 3.5px solid transparent; border-right: 3.5px solid transparent;
}
.spin b::before { top: 0; border-bottom: 4px solid #444; }
.spin b::after { bottom: 0; border-top: 4px solid #444; }

.main { height: 843px; flex: none; display: flex; }
.nav { width: 209px; margin-left: 1px; background: #fff; position: relative; display: flex; flex-direction: column; flex: none; }
.phead { height: 11px; margin-top: 1px; background: #d4d6da; display: flex; justify-content: flex-end; flex: none; }
.phead span { font: 12px/10px "Liberation Sans", sans-serif; color: #777; margin-right: 3px; }
.navt { height: 21px; line-height: 21px; background: #eee; color: #888; padding-left: 8px; border-bottom: 1px solid #c9cbce; font-weight: 500; flex: none; }
.navb { height: 27px; background: #eee; display: flex; align-items: center; padding-left: 7px; gap: 4px; border-bottom: 1px solid #c4c6ca; flex: none; }
.navbtn {
  width: 23px; height: 22px; box-sizing: border-box; border: 1px solid #6fb0ee; border-radius: 3px; background: #f4f8fc;
  display: flex; align-items: center; justify-content: center; flex: none;
}
.nb1 { margin-left: auto; }
.navbtn:last-child { margin-right: 2px; }
.tree { padding-top: 2px; overflow: hidden; }
.trow { height: 24px; display: flex; align-items: center; padding-left: 3px; gap: 4px; white-space: nowrap; }
.fold { width: 16px; height: 14px; }
.trow.sub { padding-left: 40px; }
.leaf { display: flex; align-items: center; gap: 5px; height: 21px; width: 113px; padding-left: 4px; box-sizing: border-box; }
.leaf.sel { background: #c5d6ee; }
.thumb { position: absolute; width: 8px; background: #cbcbcb; border-radius: 4px; }
.tnav { right: 4px; top: 349px; height: 480px; }

.midcol { width: 280px; margin-left: 4px; display: flex; flex-direction: column; gap: 6px; flex: none; }
.panel { background: #fff; border: 0 solid #c0c3c6; border-right-width: 1px; border-left-width: 1px; box-sizing: border-box; display: flex; flex-direction: column; position: relative; }
.p1 { height: 530px; }
.p2 { flex: 1; min-height: 0; }
.p2 .phead { margin-top: 0; }
.ptabs { height: 22px; display: flex; background: #eee; border-bottom: 1px solid #c9cbce; flex: none; padding-top: 1px; box-sizing: content-box; }
.ptab { width: 64px; text-align: center; line-height: 21px; color: #8e8e8e; background: #dedede; border-right: 1px solid #c9cbce; font-weight: 500; box-sizing: border-box; }
.ptab.on { background: #eee; color: #333; font-weight: 700; }
.ptool { height: 27px; background: #eee; display: flex; align-items: center; padding-left: 7px; gap: 2px; border-bottom: 1px solid #ccc; flex: none; }
.m1 { margin-left: 6px; }
.m2 { margin-left: 8px; }
.m3 { margin-left: 7px; }
.more { margin-left: auto; margin-right: 2px; font: 10px/12px "DejaVu Sans", sans-serif; color: #444; letter-spacing: -2px; padding-right: 4px; }
.psearch { height: 16px; display: flex; align-items: center; justify-content: space-between; padding: 0 4px 0 3px; color: #888; border-bottom: 1px solid #c4c6ca; flex: none; }
.plist { padding-top: 4px; }
.proot { height: 24px; line-height: 24px; padding-left: 23px; position: relative; }
.tri {
  position: absolute; left: 10px; top: 9px; width: 0; height: 0;
  border-left: 6px solid transparent; border-bottom: 6px solid #444;
}
.pitem { height: 24px; line-height: 21px; padding-left: 43px; width: 35px; box-sizing: content-box; }
.pitem.sel { margin-left: 40px; padding-left: 3px; height: 21px; margin-bottom: 3px; background: #b3ccec; }
.tbl { display: flex; flex-direction: column; width: 263px; }
.tr { display: grid; grid-template-columns: 22px 100px 100px 41px; height: 21px; box-sizing: border-box; border-bottom: 1px solid #d8d8d8; }
.tr > span { display: flex; align-items: center; border-right: 1px solid #d8d8d8; box-sizing: border-box; padding-left: 3px; white-space: nowrap; overflow: hidden; color: #222; }
.th > span { background: #f0f0f0; justify-content: center; padding: 0; }
.tr > .num { background: #f0f0f0; justify-content: center; padding: 0; font-size: 13px; color: #444; }
.tr > .hi, .th > .val { background: #7fb8f5; color: #fff; }
.tr > .blue { color: #2a6fdc; }
.tr > .edit { border: 2px solid #777; margin: 0 0 -1px 0; height: 21px; padding-left: 2px; }
.tr > .add { justify-content: center; padding: 0; background: #fff; }
.th > .add { background: #f0f0f0; }
.tprop { right: 3px; top: 48px; height: 210px; }

.split { width: 4px; flex: none; display: flex; align-items: center; }
.split i { width: 4px; height: 100px; background: #6d7277; display: block; }
.canvas { flex: 1; background: #000; position: relative; overflow: hidden; }
.scene { position: absolute; left: 0; top: 0; }
.ln { stroke-width: 1; fill: none; }
.nofill { fill: none; }
.bright { stroke: #00c800; }
.bright2 { stroke: #00f000; stroke-width: 1.200; }
.dark { stroke: #0a640a; }
.dark2 { stroke: #0a800a; }
.red { stroke: #e00000; }
.dred { stroke: #901010; }
.ln.grey { stroke: #777; }
.cad { fill: #fff; font-family: Roboto, "Liberation Sans", sans-serif; font-weight: 300; }
.axc { fill: #000; stroke: #0a700a; stroke-width: 1; }
.axt { fill: #fff; font: 17px "Liberation Sans", sans-serif; text-anchor: middle; }
.gz { font: 15px "Liberation Sans", sans-serif; }
.strip {
  position: absolute; right: 0; top: 0; width: 19px; height: 227px; background: #999ea3; border-left: 1px solid #ccc;
  box-sizing: border-box; display: flex; flex-direction: column; align-items: flex-end; padding-top: 12px; overflow: hidden;
}
.sphere { width: 15px; height: 18px; margin-bottom: 11px; }
.sbtn { width: 15px; height: 21px; margin-bottom: 7px; }
.scube { width: 15px; height: 23px; }
.scar {
  width: 0; height: 0; margin: 6px 2px 6px 0; flex: none;
  border-top: 4px solid #555; border-left: 4px solid transparent; border-right: 4px solid transparent;
}
.strip hr { width: 100%; margin: 2px 0 5px; border: 0; border-top: 1px solid #777; flex: none; }
.foot { flex: 1; background: #c8cacd; }
</style>
